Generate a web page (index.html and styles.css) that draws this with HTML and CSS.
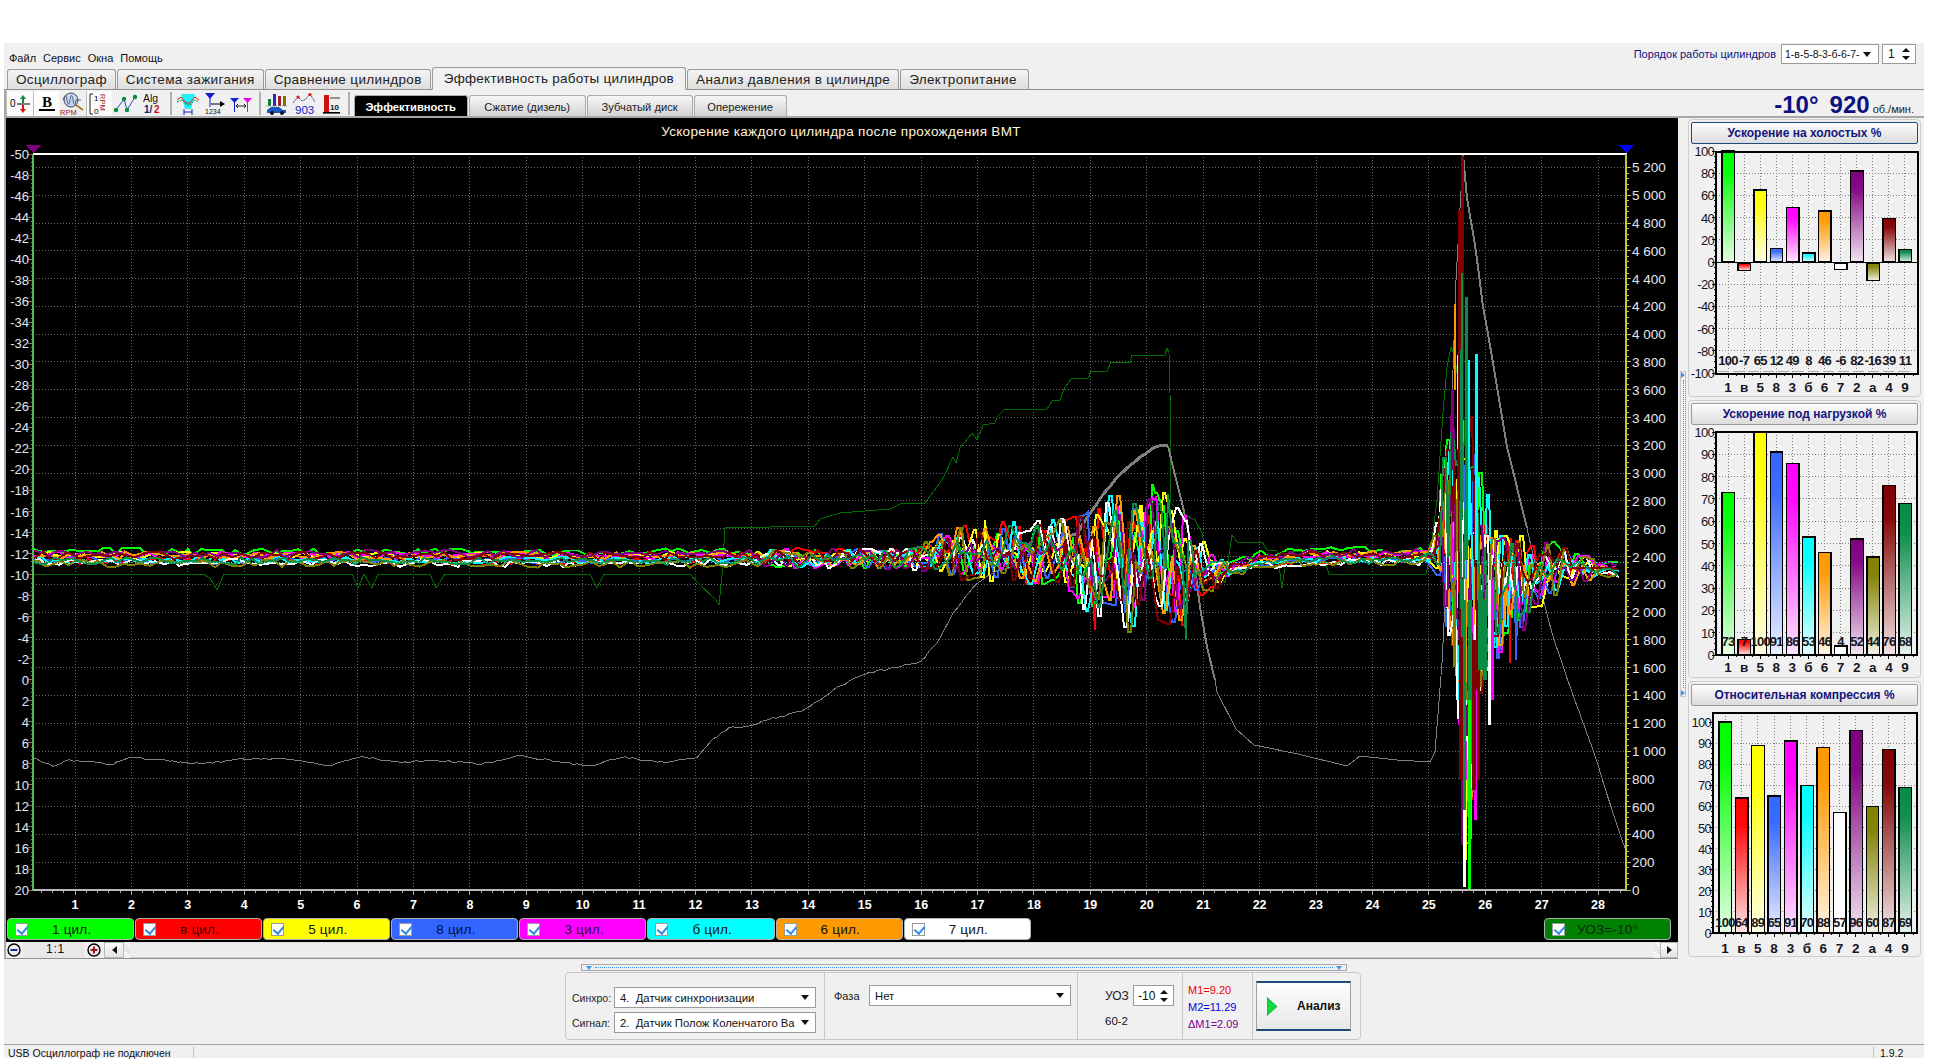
FILE: index.html
```html
<!DOCTYPE html>
<html lang="ru">
<head>
<meta charset="utf-8">
<title>Эффективность работы цилиндров</title>
<link rel="stylesheet" href="styles.css">
</head>
<body>
<div class="app">
  <header class="menubar">
    <nav class="menu"><span>Файл</span><span>Сервис</span><span>Окна</span><span>Помощь</span></nav>
    <div class="order">
      <span class="order-label">Порядок работы цилиндров</span>
      <div class="combo combo-order"><span class="combo-text">1-в-5-8-3-б-6-7-</span><i class="caret"></i></div>
      <div class="spin spin-order"><span>1</span><div class="spin-arrows"><i class="up"></i><i class="down"></i></div></div>
    </div>
  </header>
  <div class="tabs">
    <div class="tab">Осциллограф</div>
    <div class="tab">Система зажигания</div>
    <div class="tab">Сравнение цилиндров</div>
    <div class="tab active">Эффективность работы цилиндров</div>
    <div class="tab">Анализ давления в цилиндре</div>
    <div class="tab">Электропитание</div>
  </div>
  <div class="toolbar">
    <button class="tb pressed"><svg viewBox="0 0 24 24"><text x="2" y="15" class="ic-t" font-size="10">0</text><path d="M9 12h13" stroke="#000"/><path d="M15 3l3 4h-2v4h-2V7h-2z" fill="#0a8a3c"/><path d="M15 21l3-4h-2v-4h-2v4h-2z" fill="#e01010"/></svg></button>
    <button class="tb pressed2"><svg viewBox="0 0 24 24"><text x="12" y="15" text-anchor="middle" class="ic-b" font-size="15">B</text><rect x="4" y="17" width="16" height="2" fill="#000"/></svg></button>
    <button class="tb"><svg viewBox="0 0 24 24"><circle cx="11" cy="8" r="7" fill="#c6d6f2" stroke="#445"/><path d="M3 8c2-6 3-6 4 0s2 6 3 0 2-6 3 0 2 6 3 0h5" fill="none" stroke="#446" stroke-width=".8"/><path d="M16 13l7 5" stroke="#a08030" stroke-width="2"/><text x="0" y="23" class="ic-t" font-size="7.5" fill="#a01818">RPM</text></svg></button>
    <button class="tb pressed3"><svg viewBox="0 0 24 24"><path d="M5 2H2v20h3" fill="none" stroke="#222"/><text x="6" y="9" class="ic-t" font-size="8">1</text><text x="6" y="22" class="ic-t" font-size="8">0</text><text x="14" y="2" class="ic-t rot" font-size="7.5" fill="#a01818">RPM</text></svg></button>
    <button class="tb"><svg viewBox="0 0 24 24"><path d="M3 18L11 7l3 11 8-13" fill="none" stroke="#2050d0"/><circle cx="3" cy="18" r="2.2" fill="#0a8a3c"/><circle cx="11" cy="7" r="2.2" fill="#0a8a3c"/><circle cx="14" cy="18" r="2.2" fill="#0a8a3c"/><circle cx="22" cy="5" r="2.2" fill="#0a8a3c"/></svg></button>
    <button class="tb"><svg viewBox="0 0 24 24"><text x="3" y="10" class="ic-t" font-size="10.5" fill="#111">Alg</text><text x="4" y="21" class="ic-b2" font-size="10" fill="#102080">1/</text><text x="14" y="21" class="ic-b2" font-size="10" fill="#d01010">2</text></svg></button>
    <i class="tb-sep"></i>
    <button class="tb"><svg viewBox="0 0 24 24"><path d="M5 2h14l-4 15H9z" fill="#20f0f0"/><path d="M1 8l4-3 5 6h4l5-6 4 3" fill="none" stroke="#d02020"/><path d="M1 10l5-2 5 5h3l5-5 4 2" fill="none" stroke="#0a8a3c" stroke-dasharray="2 1"/><path d="M8 17v6M16 17v6" stroke="#1020c0"/><path d="M8 20h8" stroke="#1020c0"/></svg></button>
    <button class="tb"><svg viewBox="0 0 24 24"><path d="M2 1h10L7 7z" fill="#1020d0"/><path d="M7 5v10" stroke="#1020d0"/><path d="M8 12h9" stroke="#000"/><path d="M17 9l5 3-5 3z" fill="#000"/><text x="2" y="22" class="ic-t" font-size="7" fill="#111">1234</text></svg></button>
    <button class="tb"><svg viewBox="0 0 24 24"><path d="M1 6h9L5.500 11z" fill="#1020d0"/><path d="M5.500 9v11" stroke="#1020d0"/><path d="M14 6h9l-4.500 5z" fill="#f000f0"/><path d="M18.500 9v11" stroke="#f000f0"/><path d="M8 14h8M9 12l-2 2 2 2M15 12l2 2-2 2" fill="none" stroke="#222"/></svg></button>
    <i class="tb-sep"></i>
    <button class="tb"><svg viewBox="0 0 24 24"><rect x="3" y="7" width="3" height="7" fill="#1a7a3a"/><rect x="8" y="2" width="3" height="12" fill="#1c30c0"/><rect x="13" y="4" width="3" height="10" fill="#a02020"/><rect x="18" y="4" width="3" height="10" fill="#807000"/><path d="M1 14h22" stroke="#888" stroke-dasharray="1 1"/><path d="M2 21v-3l4-3h8l4 3h3v3z" fill="#1858c0"/><circle cx="7" cy="21" r="2" fill="#111"/><circle cx="17" cy="21" r="2" fill="#111"/></svg></button>
    <button class="tb"><svg viewBox="0 0 24 24"><path d="M1 11l5-6 4 4 4-2 4-5 5 8" fill="none" stroke="#304090" stroke-dasharray="2 1"/><circle cx="6" cy="5" r="1.6" fill="#e01010"/><circle cx="18" cy="2.500" r="1.6" fill="#e01010"/><text x="3" y="22" class="ic-t" font-size="11.5" fill="#1020c0">903</text></svg></button>
    <button class="tb"><svg viewBox="0 0 24 24"><rect x="5" y="3" width="5" height="17" fill="#d01010"/><rect x="4" y="20" width="17" height="1.600" fill="#000"/><text x="11" y="18" class="ic-b2" font-size="8" fill="#111">10</text><path d="M11 6h10" stroke="#333"/></svg></button>
    <i class="tb-sep"></i>
    <div class="subtabs">
      <div class="subtab on">Эффективность</div>
      <div class="subtab s2">Сжатие (дизель)</div>
      <div class="subtab s3">Зубчатый диск</div>
      <div class="subtab s4">Опережение</div>
    </div>
    <div class="rpm"><b>-10°</b><b class="rpm-val">920</b><span>об./мин.</span></div>
  </div>
  <main class="main">
    <section class="left">
      <div class="chart">
        <svg id="scope" class="scope" viewBox="6 118 1672 800" width="1672" height="800"></svg>
        <div class="legend">
          <label class="leg c1"><i class="chk"></i><span>1 цил.</span></label>
          <label class="leg c2"><i class="chk"></i><span>в цил.</span></label>
          <label class="leg c3"><i class="chk"></i><span>5 цил.</span></label>
          <label class="leg c4"><i class="chk"></i><span>8 цил.</span></label>
          <label class="leg c5"><i class="chk"></i><span>3 цил.</span></label>
          <label class="leg c6"><i class="chk"></i><span>б цил.</span></label>
          <label class="leg c7"><i class="chk"></i><span>6 цил.</span></label>
          <label class="leg c8"><i class="chk"></i><span>7 цил.</span></label>
          <label class="leg uoz"><i class="chk"></i><span>УОЗ=-10°</span></label>
        </div>
      </div>
      <div class="scrollrow">
        <svg class="zoombtn" viewBox="0 0 14 14"><circle cx="7" cy="7" r="6" fill="#eee" stroke="#000" stroke-width="1.4"/><path d="M3.500 7h7" stroke="#1030a0" stroke-width="2"/></svg>
        <div class="ratio">1:1</div>
        <svg class="zoombtn" viewBox="0 0 14 14"><circle cx="7" cy="7" r="6" fill="#eee" stroke="#000" stroke-width="1.4"/><path d="M3.500 7h7M7 3.500v7" stroke="#a01010" stroke-width="2"/></svg>
        <div class="sb-btn sb-left"><i></i></div>
        <div class="sb-check"></div>
        <div class="sb-thumb"></div>
        <div class="sb-check"></div>
        <div class="sb-btn sb-right"><i></i></div>
      </div>
    </section>
    <div class="vsplit"><div class="vhandle"><i class="tri-r"></i><i class="vdots"></i><i class="tri-r"></i></div></div>
    <aside class="right">
      <section class="panel">
        <div class="phead focus">Ускорение на холостых %</div>
        <svg id="bars1" class="barsvg" viewBox="1689 145 231 249" width="231" height="249"></svg>
      </section>
      <section class="panel">
        <div class="phead">Ускорение под нагрузкой %</div>
        <svg id="bars2" class="barsvg" viewBox="1689 425 231 249" width="231" height="249"></svg>
      </section>
      <section class="panel">
        <div class="phead">Относительная компрессия %</div>
        <svg id="bars3" class="barsvg" viewBox="1689 705 231 249" width="231" height="249"></svg>
      </section>
    </aside>
  </main>
  <section class="bottom">
    <div class="hsplit"><i class="tri-d"></i><i class="hdots"></i><i class="tri-d"></i></div>
    <div class="group">
      <div class="g-col g-sync">
        <div class="g-row"><span class="g-lab">Синхро:</span><div class="combo combo-wide"><span class="combo-text">4.&nbsp; Датчик синхронизации</span><i class="caret"></i></div></div>
        <div class="g-row"><span class="g-lab">Сигнал:</span><div class="combo combo-wide"><span class="combo-text">2.&nbsp; Датчик Полож Коленчатого Ва</span><i class="caret"></i></div></div>
      </div>
      <div class="g-col g-phase">
        <div class="g-row"><span class="g-lab2">Фаза</span><div class="combo combo-wide"><span class="combo-text">Нет</span><i class="caret"></i></div></div>
      </div>
      <div class="g-col g-uoz">
        <div class="g-row"><span class="g-lab3">УОЗ</span><div class="spin spin-uoz"><span>-10</span><div class="spin-arrows"><i class="up"></i><i class="down"></i></div></div></div>
        <div class="g-type">60-2</div>
      </div>
      <div class="g-col g-meas">
        <div class="m1">M1=9.20</div>
        <div class="m2">M2=11.29</div>
        <div class="m3">ΔM1=2.09</div>
      </div>
      <div class="g-col g-btn">
        <button class="analyze"><svg viewBox="0 0 12 20" class="play"><path d="M0 0l11 10L0 20z" fill="#12d83c" stroke="#0c9a2c" stroke-width=".6"/></svg><span>Анализ</span></button>
      </div>
    </div>
  </section>
  <footer class="status">
    <div class="st-a">USB Осциллограф не подключен</div>
    <div class="st-b"></div>
    <div class="st-c">1.9.2</div>
  </footer>
</div>
<script src="app.js"></script>
</body>
</html>
```
FILE: styles.css
```css
* { box-sizing: border-box; }
html, body { margin: 0; padding: 0; background: #fff; }
body { width: 1938px; height: 1064px; overflow: hidden; font-family: "Liberation Sans", Arial, sans-serif; color: #111; }
.app { margin: 43px 0 0 4px; width: 1920px; height: 1015px; background: #f0f0f0; display: flex; flex-direction: column; }

/* menu */
.menubar { height: 24px; display: flex; justify-content: space-between; align-items: flex-start; flex: none; }
.menu { display: flex; gap: 7px; padding: 9px 0 0 5px; font-size: 11px; line-height: 13px; }
.order { display: flex; align-items: center; padding: 1px 8px 0 0; }
.order-label { font-size: 11px; color: #101080; margin-right: 5px; }
.combo { display: flex; align-items: center; justify-content: space-between; background: #fff; border: 1px solid #9a9a9a; font-size: 12px; overflow: hidden; white-space: nowrap; }
.combo-text { overflow: hidden; }
.caret { flex: none; width: 0; height: 0; border: 4px solid transparent; border-top: 5px solid #111; border-bottom: 0; margin: 0 7px 0 4px; }
.combo-order { width: 98px; height: 20px; padding-left: 3px; font-size: 10.5px; }
.combo-order .caret { margin: 0 7px 0 0; }
.spin { display: flex; align-items: center; justify-content: space-between; background: #fff; border: 1px solid #9a9a9a; font-size: 12px; }
.spin-order { width: 34px; height: 20px; margin-left: 3px; padding: 0 5px; }
.spin-arrows { display: flex; flex-direction: column; gap: 4px; }
.spin-arrows .up { width: 0; height: 0; border: 4px solid transparent; border-bottom: 4px solid #111; border-top: 0; }
.spin-arrows .down { width: 0; height: 0; border: 4px solid transparent; border-top: 4px solid #111; border-bottom: 0; }

/* tabs */
.tabs { height: 23px; flex: none; display: flex; align-items: flex-end; padding-left: 3px; border-bottom: 1px solid #8f8f8f; gap: 1px; }
.tab { height: 20px; padding: 0 8px; font-size: 13.5px; line-height: 19px; letter-spacing: .35px; white-space: nowrap; color: #222; border: 1px solid #9a9a9a; border-bottom: 0; border-radius: 3px 3px 0 0; background: linear-gradient(#f4f4f4, #dedede); }
.tab:last-child { padding-right: 11px; }
.tab.active { height: 23px; line-height: 21px; background: #f0f0f0; padding: 0 11px; border-bottom: 1px solid #f0f0f0; margin-bottom: -1px; letter-spacing: .25px; }

/* toolbar */
.toolbar { height: 28px; flex: none; display: flex; align-items: flex-start; padding: 1px 0 0; border-bottom: 2px solid #a8a8a8; border-left: 2px solid #a8a8a8; }
.tb { width: 26.6px; height: 25px; padding: 1px 1px; margin: 0; border: 0; background: transparent; flex: none; }
.tb svg { display: block; width: 24px; height: 24px; overflow: visible; }
.tb.pressed, .tb.pressed3 { background: #fbfbfb; border-left: 1px solid #bbb; }
.tb.pressed2 { background: #fff; border-left: 1px solid #bbb; }
.tb-sep { width: 2px; height: 23px; margin: 1px 3.5px 0 4px; background: #b0b0b0; flex: none; }
.ic-t { font-family: "Liberation Sans", sans-serif; }
.ic-b { font-family: "Liberation Serif", serif; font-weight: 700; }
.ic-b2 { font-family: "Liberation Sans", sans-serif; font-weight: 700; }
.rot { writing-mode: vertical-rl; }
.subtabs { display: flex; padding-top: 4px; gap: 1px; flex: none; }
.subtab { height: 21px; font-size: 11.2px; line-height: 22px; text-align: center; background: linear-gradient(#f6f6f6, #d4d4d4); border: 1px solid #aaa; border-bottom: 0; border-radius: 3px 3px 0 0; color: #222; }
.subtab.on { width: 114px; background: #000; color: #fff; font-weight: 700; }
.s2 { width: 117px; }
.s3 { width: 106px; }
.s4 { width: 93px; }
.rpm { margin-left: auto; padding: 1px 10px 0 0; display: flex; align-items: baseline; color: #0c1080; }
.rpm b { font-size: 24px; line-height: 26px; }
.rpm-val { margin-left: 11px; }
.rpm span { font-size: 11px; color: #222; margin-left: 3px; }

/* main */
.main { height: 841px; flex: none; display: flex; }
.left { width: 1674px; flex: none; border-left: 2px solid #a8a8a8; border-bottom: 1px solid #909090; display: flex; flex-direction: column; }
.chart { height: 824px; background: #000; flex: none; }
.scope { display: block; shape-rendering: crispEdges; }
.scope text { font-family: "Liberation Sans", sans-serif; }
.grid { stroke: #6a6a6a; stroke-width: 1; stroke-dasharray: 1 2; }
.tick-l { stroke: #777; stroke-width: 1; }
.tick-r { stroke: #c0c040; stroke-width: 1; }
.tick-b { stroke: #aaa; stroke-width: 1; }
.ax-l { stroke: #58b858; stroke-width: 2; }
.ax-r { stroke: #c4c440; stroke-width: 2; }
.ax-b { stroke: #b8b8b8; stroke-width: 2; }
.ax-t { stroke: #fff; stroke-width: 2; }
.lab-l { fill: #e6e6f0; font-size: 13px; text-anchor: end; }
.lab-r { fill: #e6e6f0; font-size: 13.5px; }
.lab-b { fill: #fff; font-size: 12.5px; font-weight: 700; text-anchor: middle; }
.title { fill: #fff3dc; font-size: 13.5px; text-anchor: middle; letter-spacing: .33px; }
.trace { fill: none; stroke-width: 2; stroke-linejoin: miter; }
.trace-uoz { fill: none; stroke: #006e00; stroke-width: 1; }
.trace-rpm { fill: none; stroke: #808080; stroke-width: 1; }
.trace-rpm.thick { stroke-width: 3; }
.trace-rpm.mid { stroke-width: 2; }
.base { stroke: #30e0e0; stroke-width: 1; stroke-dasharray: 1 2; }
.tri-p { fill: #800080; }
.tri-b { fill: #0000ff; }

.legend { height: 24px; padding: 0 7px 2px 1px; display: flex; gap: 1px; align-items: stretch; }
.leg { width: 127.1px; display: flex; align-items: center; padding-left: 7px; border: 1px solid #b0b0b0; border-radius: 4px; font-size: 13.5px; color: #111; flex: none; }
.leg span { margin-left: 24px; letter-spacing: .2px; }
.chk { display: block; width: 13px; height: 13px; background: #fff; border: 1px solid #9a9a9a; position: relative; flex: none; }
.chk::after { content: ""; position: absolute; left: 3px; top: 0; width: 5px; height: 8px; border: solid #2c8ce8; border-width: 0 2px 2px 0; transform: rotate(40deg); }
.c1 { background: #00ff00; }
.c2 { background: #ff0000; color: #400; }
.c3 { background: #ffff00; }
.c4 { background: #3366ff; color: #001040; }
.c5 { background: #ff00ff; color: #300030; }
.c6 { background: #00ffff; }
.c7 { background: #ff9900; }
.c8 { background: #ffffff; }
.uoz { background: #008000; color: #0a2a0a; margin-left: auto; }
.uoz span { margin-left: 12px; }

.scrollrow { height: 16px; flex: none; display: flex; align-items: stretch; padding-left: 1px; background: #f0f0f0; }
.zoombtn { width: 14px; height: 14px; margin-top: 1px; flex: none; }
.ratio { width: 62px; margin: 0 2px; background: #e8e8e8; text-align: center; font-size: 12px; line-height: 15px; letter-spacing: .8px; padding-left: 3px; flex: none; }
.sb-btn { width: 20px; flex: none; display: flex; align-items: center; justify-content: center; background: linear-gradient(#fbfbfb, #e4e4e4); border: 1px solid #b8b8b8; margin-left: 3px; }
.sb-left i { width: 0; height: 0; border: 4px solid transparent; border-right: 5px solid #111; border-left: 0; }
.sb-right { margin-left: 0; width: 18px; }
.sb-right i { width: 0; height: 0; border: 4px solid transparent; border-left: 5px solid #111; border-right: 0; }
.sb-check { width: 6px; flex: none; background: repeating-linear-gradient(45deg, #fff, #fff 1px, #ddd 1px, #ddd 2px); }
.sb-thumb { flex: 1; background: #eeeeee; border-top: 1px solid #e0e0e0; border-bottom: 1px solid #d0d0d0; }

.vsplit { width: 10px; flex: none; display: flex; align-items: center; justify-content: center; }
.vhandle { height: 326px; width: 6px; margin-top: -10px; display: flex; flex-direction: column; align-items: center; justify-content: space-between; border: 1px solid #c8c8c8; border-right-color: #bbb; }
.vdots { flex: 1; width: 1px; border-left: 1px dotted #3a96f0; margin: 2px 0; }
.tri-r { width: 0; height: 0; border: 3px solid transparent; border-left: 4px solid #3a96f0; border-right: 0; }
.right { width: 233px; flex: none; padding-top: 1px; display: flex; flex-direction: column; gap: 3px; }
.panel { height: 278px; flex: none; border: 1px solid #cdcdcd; border-radius: 4px; padding: 2px 1px 0; overflow: hidden; }
.panel:last-child { height: 276px; }
.phead { height: 22px; margin: 0 1px 1px; font-size: 12px; font-weight: 700; color: #14147e; text-align: center; line-height: 21px; background: linear-gradient(#fdfdfd, #dcdcdc); border: 1px solid #9a9a9a; border-radius: 2px; }
.phead.focus { border-color: #1c4a7a; }
.barsvg { display: block; }
.barsvg text { font-family: "Liberation Sans", sans-serif; }
.bar-y { font-size: 13px; text-anchor: end; fill: #16161e; letter-spacing: -.7px; }
.bar-c { font-size: 13.5px; font-weight: 700; text-anchor: middle; fill: #16161e; }
.bar-v { font-size: 13px; font-weight: 700; text-anchor: middle; fill: #16161e; letter-spacing: -.7px; }
.bar-g { stroke: #808080; stroke-width: 1; stroke-dasharray: 1 2; shape-rendering: crispEdges; }
.bar-f { fill: none; stroke: #000; stroke-width: 2; shape-rendering: crispEdges; }
.bar-t { stroke: #000; stroke-width: 1; shape-rendering: crispEdges; }
.bar-d { stroke: #aaa; stroke-width: 1; stroke-dasharray: 11 4; shape-rendering: crispEdges; }
.bar-r { stroke: #000; stroke-width: 1.4; shape-rendering: crispEdges; }
.bar-z { stroke: #000; stroke-width: 1; shape-rendering: crispEdges; }

/* bottom */
.bottom { height: 85px; flex: none; padding-left: 561px; }
.hsplit { width: 766px; height: 7px; margin: 5px 0 1px 16px; border: 1px solid #a8a8a8; display: flex; align-items: center; padding: 0 4px; gap: 3px; }
.hdots { flex: 1; border-top: 1px dotted #3a96f0; }
.tri-d { width: 0; height: 0; border: 3px solid transparent; border-top: 4px solid #3a96f0; border-bottom: 0; }
.group { width: 796px; height: 68px; margin-top: 1px; border: 1px solid #c8c8c8; border-radius: 4px; display: flex; }
.g-col { height: 100%; flex: none; }
.g-sync { width: 258px; padding: 14px 0 0 6px; display: flex; flex-direction: column; gap: 4px; }
.g-row { display: flex; align-items: center; }
.g-lab { width: 42px; font-size: 10.5px; color: #222; flex: none; }
.g-lab2 { width: 35px; font-size: 11px; color: #222; flex: none; }
.g-lab3 { width: 28px; font-size: 12px; color: #222; flex: none; }
.combo-wide { width: 202px; height: 21px; padding-left: 5px; font-size: 11.3px; }
.combo-wide .caret { margin-right: 6px; }
.g-phase { width: 253px; padding: 12px 0 0 9px; border-left: 1px solid #c8c8c8; }
.g-uoz { width: 105px; padding: 12px 0 0 27px; border-left: 1px solid #c8c8c8; }
.spin-uoz { width: 41px; height: 21px; padding: 0 5px 0 4px; font-size: 12px; }
.g-type { margin-top: 9px; font-size: 11.5px; }
.g-meas { width: 70px; padding: 9px 0 0 5px; border-left: 1px solid #c8c8c8; font-size: 11px; line-height: 17px; }
.m1 { color: #ee0000; }
.m2 { color: #0000e0; }
.m3 { color: #800090; }
.g-btn { padding: 8px 0 0 3px; border-left: 1px solid #c8c8c8; }
.analyze { width: 95px; height: 50px; padding: 0 0 0 10px; margin: 0; display: flex; align-items: center; background: linear-gradient(#fdfdfd, #e8e8e8); border: 1px solid #a0a0a0; border-top: 2px solid #1c4a7a; border-bottom: 2px solid #1c4a7a; font: 700 12px "Liberation Sans", sans-serif; color: #111; }
.play { width: 11px; height: 19px; flex: none; }
.analyze span { margin-left: 19px; }

/* status */
.status { height: 14px; flex: none; display: flex; border-top: 1px solid #a4a4a4; font-size: 10.5px; line-height: 13px; padding-top: 2px; background: #f0f0f0; }
.st-a { width: 190px; padding-left: 4px; border-right: 1px solid #c4c4c4; color: #112; flex: none; }
.st-b { flex: 1; }
.st-c { width: 51px; padding-left: 6px; border-left: 1px solid #c4c4c4; flex: none; }
```
FILE: app.js
```js
(function () {
  var NS = 'http://www.w3.org/2000/svg';
  function el(parent, name, attrs, text) {
    var n = document.createElementNS(NS, name);
    for (var k in attrs) n.setAttribute(k, attrs[k]);
    if (text !== undefined) n.textContent = text;
    parent.appendChild(n);
    return n;
  }
  function line(p, c, x1, y1, x2, y2) { return el(p, 'line', { 'class': c, x1: x1, y1: y1, x2: x2, y2: y2 }); }
  function rng(seed) {
    return function () {
      seed |= 0; seed = seed + 0x6D2B79F5 | 0;
      var t = Math.imul(seed ^ seed >>> 15, 1 | seed);
      t = t + Math.imul(t ^ t >>> 7, 61 | t) ^ t;
      return ((t ^ t >>> 14) >>> 0) / 4294967296;
    };
  }
  function interp(tab, x) {
    if (x <= tab[0][0]) return tab[0].slice(1);
    for (var i = 1; i < tab.length; i++) {
      if (x <= tab[i][0]) {
        var f = (x - tab[i - 1][0]) / (tab[i][0] - tab[i - 1][0]);
        return tab[i].slice(1).map(function (v, j) { return tab[i - 1][j + 1] + (v - tab[i - 1][j + 1]) * f; });
      }
    }
    return tab[tab.length - 1].slice(1);
  }
  function pts(a) { return a.map(function (p) { return p[0].toFixed(1) + ',' + p[1].toFixed(1); }).join(' '); }
  /* adds a few pixels of jitter between the given way-points */
  function rough(a, seed, dx, n) {
    var r = rng(seed), out = [];
    for (var x = a[0][0]; x < a[a.length - 1][0]; x += dx) {
      out.push([x, interp(a, x)[0] + (r() * 2 - 1) * n]);
    }
    out.push(a[a.length - 1]);
    return out;
  }

  var COL = ['#00ff00', '#ff0000', '#ffff00', '#3366ff', '#ff00ff', '#00ffff', '#ff9900', '#ffffff', '#800080', '#808000', '#800000', '#0a8c46'];

  /* ---------- oscilloscope ---------- */
  var S = document.getElementById('scope');
  var L = 33, R = 1626, T = 154, B = 890;
  function X(n) { return 75 + (n - 1) * 56.41; }

  el(S, 'text', { 'class': 'title', x: 841, y: 136 }, 'Ускорение каждого цилиндра после прохождения ВМТ');

  var i, j, y, x;
  for (i = 200; i <= 5200; i += 200) line(S, 'grid', L, 890 - i * 0.13895, R, 890 - i * 0.13895);
  for (i = 1; i <= 28; i++) line(S, 'grid', X(i), T, X(i), B);

  for (i = 0; i <= 35; i++) {
    y = T + i * 21.03;
    line(S, 'tick-l', 28, y, 33, y);
    if (i < 35) for (j = 1; j < 5; j++) line(S, 'tick-l', 30.5, y + j * 4.206, 33, y + j * 4.206);
    var v = -50 + i * 2;
    el(S, 'text', { 'class': 'lab-l', x: 29, y: y + 5 }, String(v));
  }
  for (i = 0; i <= 5200; i += 40) {
    y = 890 - i * 0.13895;
    var maj = i % 200 === 0;
    line(S, 'tick-r', 1626, y, maj ? 1631 : 1629, y);
    if (maj) {
      var s = i >= 1000 ? Math.floor(i / 1000) + ' ' + ('00' + (i % 1000)).slice(-3) : String(i);
      el(S, 'text', { 'class': 'lab-r', x: 1632, y: y + 5 }, s);
    }
  }
  for (x = 0; x <= 29 * 5; x++) {
    var xx = X(1) - 56.41 + x * 11.282;
    if (xx < L || xx > R) continue;
    line(S, 'tick-b', xx, 890, xx, x % 5 === 0 ? 895 : 893);
  }
  for (i = 1; i <= 28; i++) el(S, 'text', { 'class': 'lab-b', x: X(i), y: 909 }, String(i));

  /* UOZ line */
  var uoz = [[33, 574], [203, 574], [210, 578], [217, 590], [224, 574], [352, 574], [358, 588], [364, 574], [372, 588], [378, 574], [430, 574], [436, 588], [445, 574], [590, 574], [597, 588], [604, 574], [690, 574], [698, 583], [716, 600], [719, 605], [722, 575], [725, 528], [815, 526], [820, 519], [840, 513], [890, 509], [900, 504], [925, 503], [942, 480], [953, 457], [956, 463], [960, 448], [972, 433], [977, 440], [983, 425], [995, 423], [997, 417], [1005, 409], [1047, 409], [1052, 401], [1060, 400], [1065, 387], [1072, 378], [1088, 378], [1091, 371], [1107, 371], [1111, 362], [1130, 363], [1132, 355], [1165, 355], [1167, 348], [1169, 353], [1170, 393], [1171, 503], [1180, 512], [1195, 520], [1202, 533], [1207, 557], [1213, 567], [1225, 583], [1232, 535], [1237, 542], [1262, 542], [1267, 550], [1277, 551], [1282, 588], [1285, 567], [1290, 551], [1322, 552], [1329, 574], [1426, 574], [1430, 557], [1437, 500], [1443, 413], [1447, 367], [1451, 347], [1455, 357], [1457, 373], [1462, 372], [1464, 420], [1470, 574]];
  el(S, 'polyline', { 'class': 'trace-uoz', points: pts(uoz) });

  /* RPM line */
  var rp1 = [[33, 758], [40, 761], [52, 766], [70, 760], [90, 762], [110, 765], [130, 758], [160, 760], [200, 764], [240, 759], [290, 759], [330, 766], [360, 757], [400, 762], [440, 761], [480, 764], [520, 756], [560, 762], [590, 766], [620, 757], [660, 762], [696, 758], [712, 740], [729, 728], [750, 726], [766, 720], [803, 711], [840, 686], [865, 674], [900, 666], [920, 662], [937, 643], [953, 613], [973, 587], [993, 573], [1030, 560], [1060, 539]];
  el(S, 'polyline', { 'class': 'trace-rpm', points: pts(rough(rp1, 77, 4, 1)) });
  el(S, 'polyline', { 'class': 'trace-rpm thick', points: pts(rough([[1060, 539], [1077, 533], [1097, 503], [1117, 477], [1140, 457], [1157, 446], [1168, 446]], 78, 4, 0.8)) });
  el(S, 'polyline', { 'class': 'trace-rpm mid', points: pts([[1168, 446], [1173, 467], [1183, 507], [1193, 553], [1200, 607], [1207, 647], [1215, 680]]) });
  el(S, 'polyline', { 'class': 'trace-rpm', points: pts([[1215, 680], [1217, 692], [1236, 729], [1254, 745], [1298, 754], [1347, 766], [1360, 756], [1397, 760], [1430, 762], [1435, 752], [1442, 663], [1447, 563], [1452, 400], [1456, 280], [1463, 155]]) });
  el(S, 'polyline', { 'class': 'trace-rpm mid', points: pts(rough([[1463, 155], [1465, 167], [1467, 197], [1477, 257], [1483, 307], [1493, 363], [1507, 447], [1527, 528]], 79, 4, 1)) });
  el(S, 'polyline', { 'class': 'trace-rpm', points: pts(rough([[1527, 528], [1543, 597], [1553, 637], [1570, 687], [1593, 750], [1613, 813], [1625, 848]], 80, 4, 1)) });

  /* cylinder traces: bounds table [x, top, bottom] */
  var band = [[33, 551, 565], [700, 551, 566], [760, 548, 568], [900, 549, 569], [930, 538, 572], [950, 528, 580], [1000, 520, 583], [1060, 520, 585], [1080, 505, 610], [1120, 490, 630], [1150, 483, 645], [1170, 490, 640], [1185, 510, 625], [1200, 538, 603], [1215, 558, 590], [1230, 562, 578], [1260, 552, 570], [1300, 549, 566], [1425, 548, 566], [1430, 545, 570], [1436, 520, 575], [1442, 460, 590], [1450, 420, 680], [1458, 400, 780], [1463, 380, 860], [1468, 400, 880], [1474, 430, 800], [1480, 470, 720], [1486, 490, 700], [1492, 510, 690], [1500, 530, 650], [1510, 535, 640], [1520, 535, 635], [1530, 545, 625], [1540, 545, 610], [1550, 540, 600], [1560, 545, 590], [1575, 552, 585], [1590, 558, 580], [1605, 564, 575], [1620, 568, 574]];
  var off = [-7, 3, -3, 2, -3, 2, -3, 5, -5, 6, -3, 3];
  var peaks = {
    0: [[1463, 420], [1152, 485], [1153, 485]], 1: [[1472, 800], [1510, 663], [1095, 630]], 2: [[1458, 355], [985, 520], [1140, 505], [1142, 505]],
    3: [[1462, 430], [1516, 660], [1088, 512]], 4: [[1452, 390], [1155, 500], [1157, 500]], 5: [[1120, 505]],
    6: [[1090, 550]], 7: [[1061, 518], [1063, 518]], 8: [[1452, 390], [1147, 503]],
    9: [[1490, 560]], 10: [[1478, 780]], 11: [[1186, 640], [1168, 494]]
  };
  var g = el(S, 'g', {});
  COL.forEach(function (color, ci) {
    var rnd = rng(101 + ci * 37), a = [], xp = 33, end = 1620;
    while (xp <= end) {
      var b = interp(band, xp), top = b[0], bot = b[1];
      var c = (top + bot) / 2, amp = (bot - top) / 2;
      var busy = xp > 1436 && xp < 1530, y, r;
      if (amp < 10) {
        y = c + off[ci] * 0.9 + (rnd() * 2 - 1) * 4;
        a.push([xp, y]);
        xp += 5 + Math.floor(rnd() * 7);
      } else {
        r = rnd() * 2 - 1;
        r = (r < 0 ? -1 : 1) * Math.pow(Math.abs(r), busy ? 1.5 : 1.6);
        y = c + r * amp;
        a.push([xp, y]);
        /* larger excursions are held for a few pixels, which gives them their column look */
        if (Math.abs(r) > 0.45) { a.push([xp + 2 + Math.floor(rnd() * 2), y]); xp += 3; }
        xp += busy ? 2 + Math.floor(rnd() * 3) : 4 + Math.floor(rnd() * 4);
      }
    }
    (peaks[ci] || []).forEach(function (p) { a.push(p); });
    a.sort(function (m, n) { return m[0] - n[0]; });
    el(g, 'polyline', { 'class': 'trace', stroke: color, points: pts(a) });
  });

  /* the solid columns of the misfire burst around mark 26: [cylinder, x, from, to, width] */
  [[8, 1463, 640, 845, 4], [2, 1466, 780, 860, 2], [7, 1464, 790, 887, 3], [0, 1469, 700, 890, 3],
   [4, 1475, 690, 820, 3], [4, 1492, 580, 700, 3], [7, 1489, 580, 725, 3], [9, 1454, 590, 667, 3],
   [6, 1455, 304, 390, 2], [8, 1452, 390, 470, 3], [5, 1476, 354, 560, 3], [5, 1469, 360, 540, 2],
   [10, 1459, 210, 500, 3], [10, 1462, 156, 420, 3], [10, 1461, 640, 780, 4], [10, 1474, 640, 790, 4], [10, 1478, 600, 780, 3],
   [11, 1462, 273, 520, 2], [11, 1466, 297, 560, 3], [11, 1461, 350, 520, 3], [11, 1470, 600, 700, 4], [11, 1480, 590, 670, 5], [11, 1464, 600, 810, 3], [11, 1485, 600, 680, 4]
  ].forEach(function (q) {
    el(g, 'line', { stroke: COL[q[0]], 'stroke-width': q[4], x1: q[1], y1: q[2], x2: q[1], y2: q[3] });
  });

  line(S, 'base', L, 562, R, 562);
  line(S, 'ax-t', L, T, R + 1, T);
  line(S, 'ax-l', L, T, L, B);
  line(S, 'ax-r', R, T, R, B);
  line(S, 'ax-b', L, B, R, B);
  el(S, 'path', { 'class': 'tri-p', d: 'M25 145h16l-8 8z' });
  el(S, 'path', { 'class': 'tri-b', d: 'M1618 145h16l-8 8z' });

  /* ---------- bar charts ---------- */
  var CATS = ['1', 'в', '5', '8', '3', 'б', '6', '7', '2', 'а', '4', '9'];
  function mix(hex, f) {
    var n = parseInt(hex.slice(1), 16), rgb = [n >> 16 & 255, n >> 8 & 255, n & 255];
    return 'rgb(' + rgb.map(function (c) { return Math.round(c + (255 - c) * f); }).join(',') + ')';
  }
  function bars(id, o) {
    var s = document.getElementById(id);
    var defs = el(s, 'defs', {});
    COL.forEach(function (c, i) {
      var gr = el(defs, 'linearGradient', { id: id + 'g' + i, x1: 0, y1: 0, x2: 0, y2: 1 });
      var col = c === '#0a8c46' ? '#078a48' : c;
      el(gr, 'stop', { offset: '0', 'stop-color': col });
      el(gr, 'stop', { offset: '0.2', 'stop-color': mix(col, 0.04) });
      el(gr, 'stop', { offset: '1', 'stop-color': mix(col, 0.9) });
    });
    var v;
    for (v = o.min; v <= o.max; v += o.stepY) {
      var yy = o.zero - v * o.unit;
      if (v !== o.min && v !== o.max) line(s, 'bar-g', o.x0, yy, o.x1, yy);
      line(s, 'bar-t', o.x0 - 4, yy, o.x0, yy);
      el(s, 'text', { 'class': 'bar-y', x: o.x0 - 2, y: yy + 5 }, String(v));
      for (var m = 1; m < 4 && v < o.max; m++) {
        var ym = yy - m * o.stepY * o.unit / 4;
        line(s, 'bar-t', o.x0 - 2, ym, o.x0, ym);
      }
    }
    o.vals.forEach(function (val, i) {
      var cx = o.bar0 + i * o.bstep;
      line(s, 'bar-g', cx, o.y0, cx, o.y1);
      line(s, 'bar-t', cx, o.y1, cx, o.y1 + 4);
      line(s, 'bar-t', cx + o.bstep / 2, o.y1, cx + o.bstep / 2, o.y1 + 2);
    });
    if (o.dash) line(s, 'bar-d', o.x0 + 2, o.y1 - 3, o.x1 - 5, o.y1 - 3);
    if (o.min < 0) line(s, 'bar-z', o.x0, o.zero, o.x1, o.zero);
    o.vals.forEach(function (val, i) {
      var cx = o.bar0 + i * o.bstep, h = Math.abs(val) * o.unit;
      el(s, 'rect', {
        'class': 'bar-r', x: cx - 6, y: val >= 0 ? o.zero - h : o.zero + 1, width: 12.5, height: Math.max(h, 1),
        fill: 'url(#' + id + 'g' + i + ')'
      });
    });
    el(s, 'rect', { 'class': 'bar-f', x: o.x0, y: o.y0, width: o.x1 - o.x0, height: o.y1 - o.y0 });
    o.vals.forEach(function (val, i) {
      var cx = o.bar0 + i * o.bstep;
      el(s, 'text', { 'class': 'bar-v', x: cx, y: o.valY }, String(val));
      el(s, 'text', { 'class': 'bar-c', x: cx, y: o.catY }, CATS[i]);
    });
  }
  bars('bars1', { x0: 1715, x1: 1917, y0: 152, y1: 374, zero: 262, unit: 1.11, min: -100, max: 100, stepY: 20, bar0: 1727, bstep: 16.09, valY: 365, catY: 392, dash: true,
    vals: [100, -7, 65, 12, 49, 8, 46, -6, 82, -16, 39, 11] });
  bars('bars2', { x0: 1715, x1: 1916, y0: 431, y1: 654, zero: 654, unit: 2.23, min: 0, max: 100, stepY: 10, bar0: 1727, bstep: 16.09, valY: 645, catY: 671,
    vals: [73, 7, 100, 91, 86, 53, 46, 4, 52, 44, 76, 68] });
  bars('bars3', { x0: 1712, x1: 1916, y0: 711, y1: 931, zero: 931, unit: 2.11, min: 0, max: 100, stepY: 10, bar0: 1724, bstep: 16.36, valY: 925, catY: 951,
    vals: [100, 64, 89, 65, 91, 70, 88, 57, 96, 60, 87, 69] });
})();
```
